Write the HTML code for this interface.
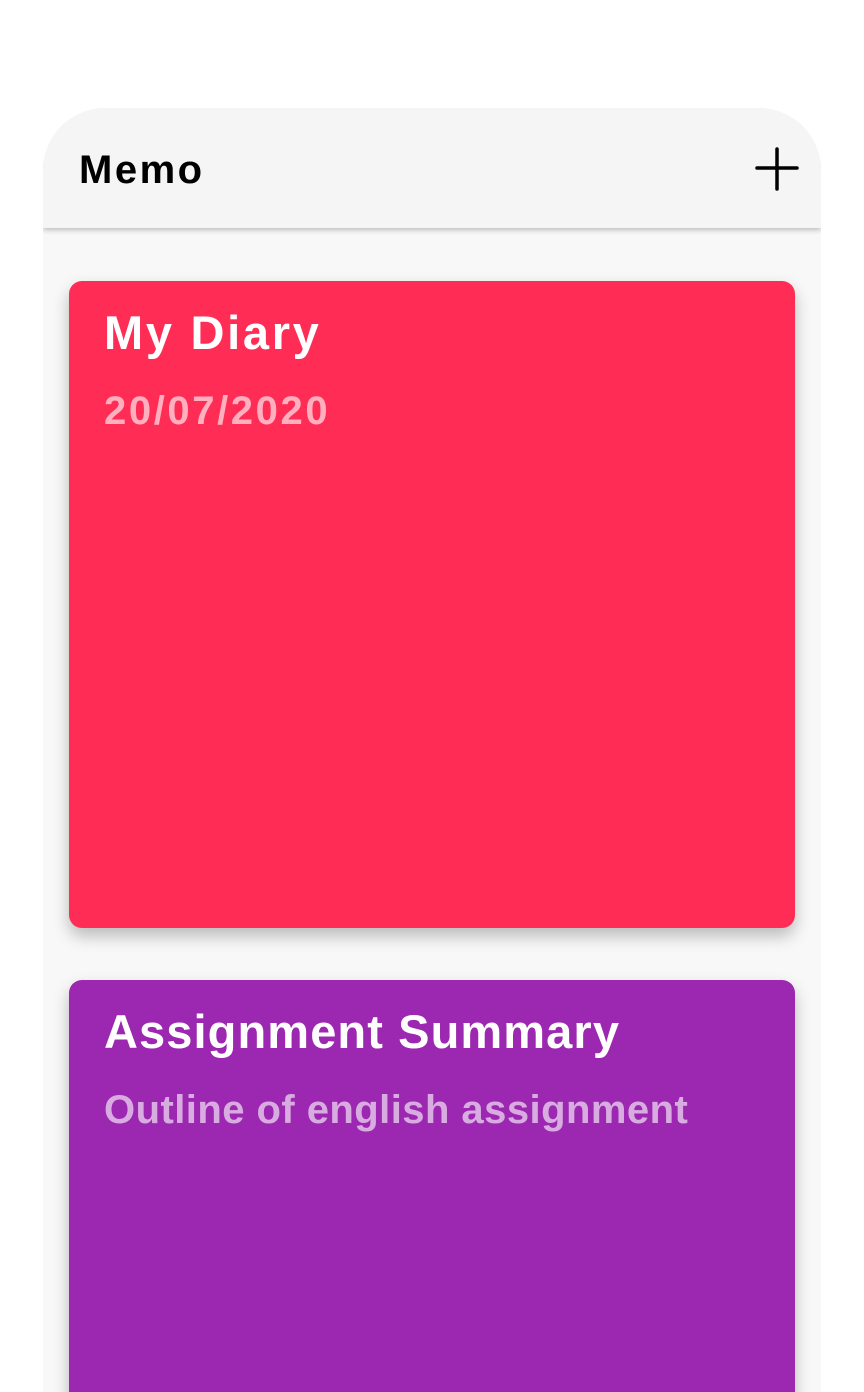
<!DOCTYPE html>
<html><head><style>
html,body{margin:0;padding:0;background:#fff;width:864px;height:1392px;overflow:hidden;font-family:"Liberation Sans",sans-serif}
.frame{position:absolute;left:43px;top:108px;width:778px;height:1284px;background:#f8f8f8;border-radius:62px 62px 0 0;overflow:hidden}
.hdr{position:absolute;left:0;top:0;width:778px;height:120px;background:#f5f5f5;box-shadow:0 2px 5px rgba(0,0,0,0.25);z-index:2}
.hdr .t{position:absolute;left:36px;top:40px;font-size:40px;font-weight:bold;color:#000;letter-spacing:2.5px}
.card{position:absolute;left:26px;width:726px;border-radius:13px;box-shadow:0 8px 16px rgba(0,0,0,0.25);color:#fff}
.card .h{position:absolute;left:35px;top:24px;font-size:47px;font-weight:bold;white-space:nowrap}
.card .s{position:absolute;left:35px;top:108px;font-size:40px;font-weight:bold;color:rgba(255,255,255,0.62);white-space:nowrap}
</style></head><body>
<div class="frame">
 <div class="hdr"><div class="t">Memo</div>
  <svg style="position:absolute;left:712px;top:38px" width="46" height="46" viewBox="0 0 46 46"><path d="M22 3V43M2 22H42" stroke="#000" stroke-width="3.5" stroke-linecap="round"/></svg>
 </div>
 <div class="card" style="top:173px;height:647px;background:#ff2d55"><div class="h" style="letter-spacing:2.7px">My Diary</div><div class="s" style="letter-spacing:2.6px">20/07/2020</div></div>
 <div class="card" style="top:872px;height:520px;background:#9c27b0"><div class="h" style="letter-spacing:1.1px">Assignment Summary</div><div class="s" style="letter-spacing:0.45px">Outline of english assignment</div></div>
</div>
</body></html>
